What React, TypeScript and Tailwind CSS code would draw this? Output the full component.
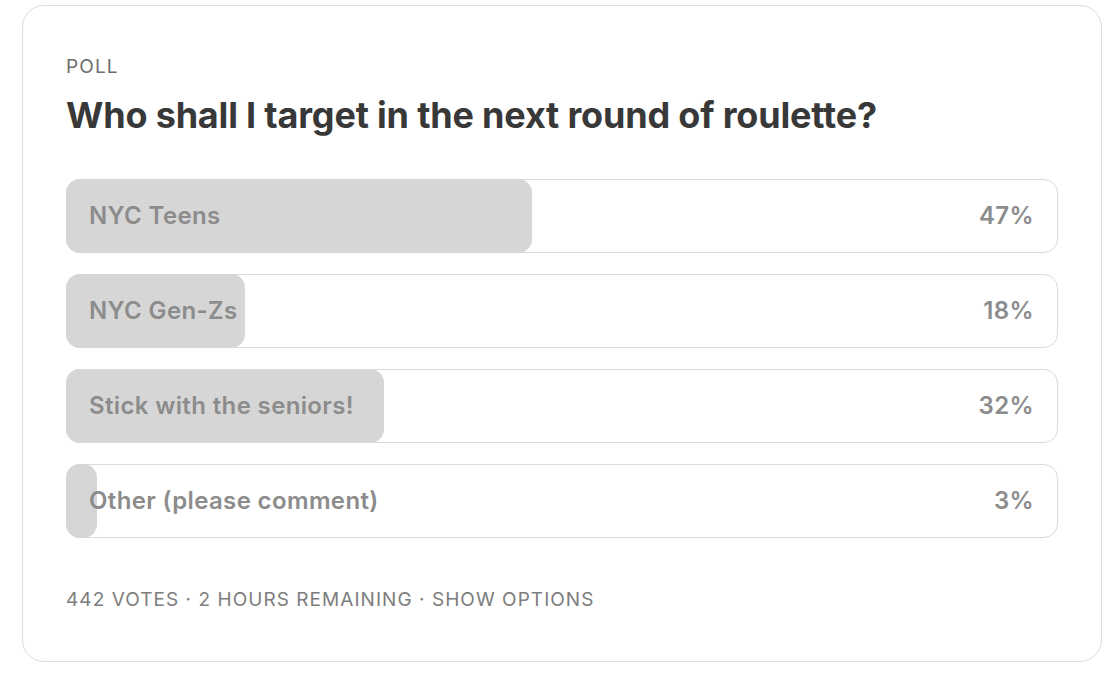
const options = [
  { label: "NYC Teens", pct: 47 },
  { label: "NYC Gen-Zs", pct: 18 },
  { label: "Stick with the seniors!", pct: 32 },
  { label: "Other (please comment)", pct: 3 },
];

const PollOption = ({ label, pct }: { label: string; pct: number }) => (
  <div className="relative h-[74px] rounded-[14px] border border-[#dadada] bg-white">
    <div
      className="absolute -left-px -top-px -bottom-px rounded-[14px] bg-[#d6d6d6]"
      style={{ width: `calc(${pct}% + 1px)`, minWidth: "30px" }}
    />
    <div className="relative flex h-full items-center justify-between pl-[22px] pr-[23px] text-[24px] font-semibold tracking-[0.015em] text-[#8c8c8c]">
      <span>{label}</span>
      <span>{pct}%</span>
    </div>
  </div>
);

const App = () => {
  return (
    <div className="min-h-[686px] bg-white pl-[22px] pr-[18px] pt-[5px] font-['Inter',sans-serif]">
      <div className="h-[657px] rounded-[22px] border border-[#dcdcdc] px-[43px] pt-[49px]">
        <p className="text-[19px] leading-[24px] tracking-[0.06em] text-[#6e6e6e]">POLL</p>
        <h2 className="mt-[14px] text-[36px] leading-[44px] font-bold tracking-[-0.005em] text-[#383838]">
          Who shall I target in the next round of roulette?
        </h2>

        <div className="mt-[42px] flex flex-col gap-[21px]">
          {options.map((o) => (
            <PollOption key={o.label} label={o.label} pct={o.pct} />
          ))}
        </div>

        <p className="mt-[50px] text-[19px] leading-[24px] tracking-[0.055em] text-[#7d7d7d]">
          442 VOTES · 2 HOURS REMAINING · SHOW OPTIONS
        </p>
      </div>
    </div>
  );
};

export default App;
